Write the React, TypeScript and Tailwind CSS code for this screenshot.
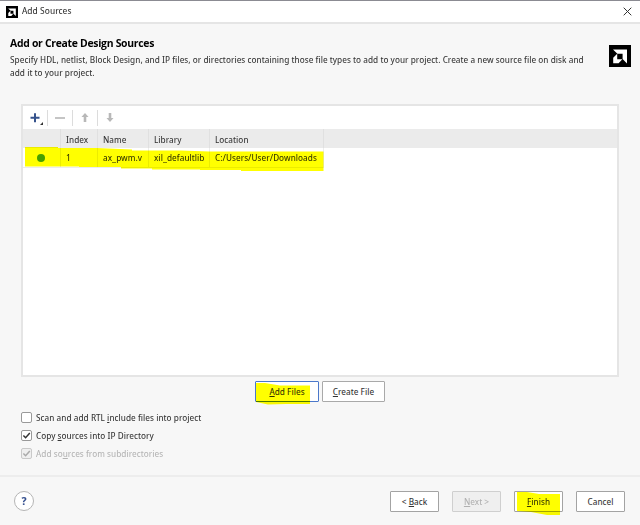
import React from "react";

function Logo({ className }: { className: string }) {
  return (
    <svg className={className} viewBox="0 0 22 22">
      <rect width="22" height="22" fill="#000" />
      <path d="M4 4.4H18V18.4L13.6 14V8.8H8.4Z" fill="#fff" />
      <path d="M8.2 8.8V14.2H13.4L9.6 18.2H4.2V12.8Z" fill="#fff" />
    </svg>
  );
}

function Button({ children, className = "", width = "w-[49px]" }: { children: React.ReactNode; className?: string; width?: string }) {
  return (
    <button className={`relative flex h-[21px] shrink-0 items-center justify-center rounded-[1px] border whitespace-pre ${width} ${className}`}>
      {children}
    </button>
  );
}

const U = ({ children }: { children: string }) => (
  <span className="underline decoration-1 underline-offset-[1px]">{children}</span>
);

function Check({ checked, disabled, children }: { checked?: boolean; disabled?: boolean; children: React.ReactNode }) {
  return (
    <div className={`flex h-[18.4px] items-center ${disabled ? "text-[#b4b4b4]" : "text-[#333]"}`}>
      <span className={`mr-[4px] flex size-[11px] items-center justify-center rounded-[2px] border ${disabled ? "border-[#c9c9c9] bg-[#efefef]" : "border-[#999] bg-white"}`}>
        {checked && (
          <svg className="size-[9px] shrink-0" viewBox="0 0 9 9" fill="none" stroke={disabled ? "#aaa" : "#333"} strokeWidth="1.5">
            <path d="M1.4 4.5L3.6 6.7L7.8 2" />
          </svg>
        )}
      </span>
      <span className="mt-px whitespace-pre">{children}</span>
    </div>
  );
}

const Divider = () => <span className="h-[16px] w-px shrink-0 bg-[#dcdcdc]" />;

export default function App() {
  return (
    <div className="flex h-[525px] w-[640px] flex-col overflow-hidden bg-[#f7f7f7] font-['Noto_Sans_Display','Open_Sans',sans-serif] text-[9.6px] leading-[12px] tracking-[0.04px] text-[#333] font-stretch-semi-condensed">
      <header className="flex h-[24px] shrink-0 items-center border-t border-b-2 border-t-[#8b8b92] border-b-[#e5e5e5] bg-white pl-[6px]">
        <Logo className="size-[12px]" />
        <span className="-mt-px ml-[4px] text-[9.8px]">Add Sources</span>
        <svg className="mr-[8px] ml-auto size-[9px]" viewBox="0 0 9 9" stroke="#333" strokeWidth="1">
          <path d="M.7.7L8.3 8.3M8.3.7L.7 8.3" />
        </svg>
      </header>

      <section className="flex h-[80px] shrink-0 pt-[13px] pl-[10px]">
        <div className="w-[598px]">
          <h1 className="font-['Open_Sans'] text-[10.4px] leading-[13px] font-bold tracking-[-0.28px] text-black font-stretch-normal">Add or Create Design Sources</h1>
          <p className="mt-[4px] leading-[12px] whitespace-pre">Specify HDL, netlist, Block Design, and IP files, or directories containing those file types to add to your project. Create a new source file on disk and</p>
          <p className="leading-[13px] whitespace-pre">add it to your project.</p>
        </div>
        <Logo className="mt-[8px] ml-px size-[22px]" />
      </section>

      <main className="ml-[21px] flex h-[273px] w-[598px] shrink-0 flex-col border-2 border-[#e5e5e5] bg-white">
        <div className="flex h-[23px] shrink-0 items-center">
          <svg className="mr-[3px] ml-[6px] h-[14px] w-[15px]" viewBox="0 0 15 14">
            <path d="M6 2.3V11.3M1.5 6.8H10.5" stroke="#35528c" strokeWidth="2" />
            <path d="M14 11V14H11Z" fill="#333" />
          </svg>
          <Divider />
          <svg className="mx-[7px] h-[10px] w-[10px]" viewBox="0 0 10 10"><path d="M0 5H10" stroke="#bbb" strokeWidth="1.7" /></svg>
          <Divider />
          <svg className="mx-[8px] h-[9px] w-[8px]" viewBox="0 0 8 9"><path d="M4 0L7.5 4H5.3V9H2.7V4H.5Z" fill="#b8b8b8" /></svg>
          <Divider />
          <svg className="mx-[8px] h-[9px] w-[8px]" viewBox="0 0 8 9"><path d="M4 9L.5 5H2.7V0H5.3V5H7.5Z" fill="#b8b8b8" /></svg>
        </div>
        <div className="relative">
          <div className="grid h-[19px] grid-cols-[38px_37px_51px_61px_114px_1fr] bg-[#ebebeb] leading-[22px] *:border-r *:border-[#e0e0e0] *:pl-[5px]">
            <span /><span>Index</span><span>Name</span><span>Library</span><span>Location</span>
          </div>
          <div className="grid h-[19px] grid-cols-[38px_37px_51px_61px_114px] leading-[19px] whitespace-pre *:border-r *:border-b *:border-[#ececec] *:pl-[5px]">
            <span className="flex items-center"><i className="ml-[9px] size-[8px] rounded-full bg-[#46a000]" /></span>
            <span>1</span><span>ax_pwm.v</span><span>xil_defaultlib</span><span>C:/Users/User/Downloads</span>
          </div>
          <svg className="absolute top-0 left-0 h-[44px] w-[310px] mix-blend-multiply" viewBox="0 0 310 44">
            <path d="M2 18H35V19H74L109 20.5V21.5H158L186 22.5H300.5V42H218V41H177V40.5H129V39.5H98V38H56V37.5H2Z" fill="#ff0" />
          </svg>
        </div>
      </main>

      <div className="mt-[4px] ml-[255px] flex h-[21px] shrink-0 gap-[3px]">
        <Button width="w-[64px]" className="border-[1.5px] border-[#4b78ca] bg-white">
          <span><U>A</U>dd Files</span>
          <svg className="absolute top-0 left-0 h-[24px] w-[56px] mix-blend-multiply" viewBox="0 0 56 24"><path d="M0 1H9L24 3.5H54V22H30L12 22.5L0 20Z" fill="#ff0" /></svg>
        </Button>
        <Button width="w-[63px]" className="border-[#a9a9a9] bg-white"><span><U>C</U>reate File</span></Button>
      </div>

      <section className="mt-[6px] ml-[21px] flex h-[67px] shrink-0 flex-col">
        <Check>Scan and add RTL <U>i</U>nclude files into project</Check>
        <Check checked>Copy <U>s</U>ources into IP Directory</Check>
        <Check checked disabled>Add so<U>u</U>rces from subdirectories</Check>
      </section>

      <footer className="flex flex-1 items-start border-t-2 border-[#ededed] pt-[14px] pl-[14px]">
        <span className="flex size-[20px] items-center justify-center rounded-full border border-[#b5b5b5] bg-white text-[11px] font-bold text-[#35508f] font-stretch-normal">?</span>
        <div className="ml-[356px] flex gap-[13px]">
          <Button className="border-[#a3a3a3] bg-white"><span>&lt; <U>B</U>ack</span></Button>
          <Button className="border-[#cfcfcf] bg-[#efefef] text-[#b0b0b0]"><span><U>N</U>ext &gt;</span></Button>
          <Button className="border-[#a3a3a3] bg-white">
            <span><U>F</U>inish</span>
            <svg className="absolute top-0 left-[2px] h-[24px] w-[44px] mix-blend-multiply" viewBox="0 0 44 24"><path d="M0 0H10L22 2H43V23H30L14 20L0 19Z" fill="#ff0" /></svg>
          </Button>
          <Button className="border-[#a3a3a3] bg-white">Cancel</Button>
        </div>
      </footer>
    </div>
  );
}
